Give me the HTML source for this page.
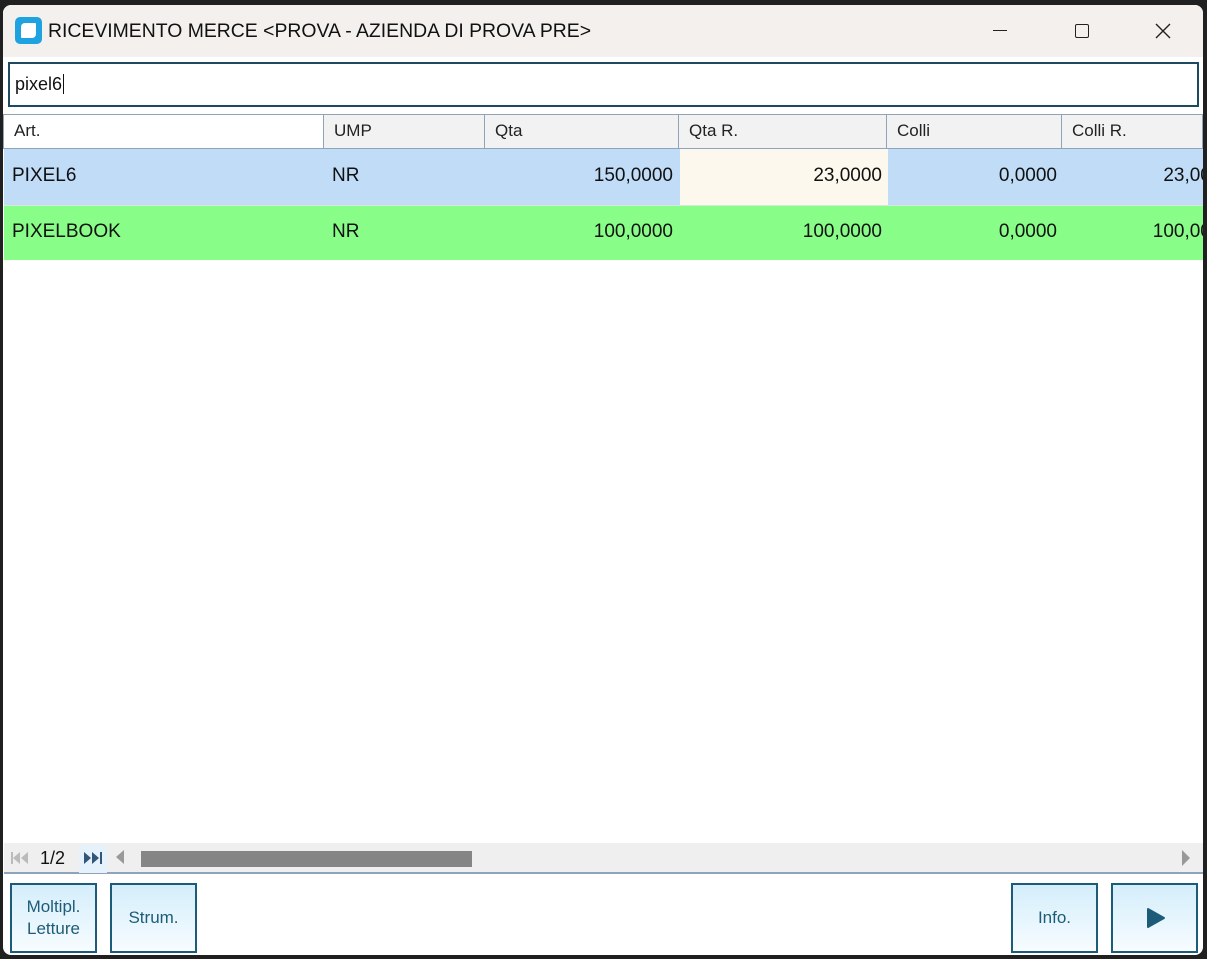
<!DOCTYPE html>
<html><head><style>
*{box-sizing:border-box;margin:0;padding:0}
body{width:1207px;height:959px;background:#202020;position:relative;overflow:hidden;font-family:"Liberation Sans","DejaVu Sans",sans-serif}
.win{position:absolute;left:3px;top:5px;width:1200px;height:950px;background:#fff;border-radius:8px;overflow:hidden}
.title{position:absolute;left:0;top:0;width:1200px;height:52px;background:#f3f0ee}
.abs{position:absolute}
.tt{left:45px;top:15px;font-size:19.4px;color:#111}
.input{left:5px;top:57px;width:1191px;height:45px;border:2px solid #1d4a5e;background:#fff}
.hdr{top:109px;height:35px;background:#f2f2f2;border:1px solid #8fa3bb;border-left:none;font-size:17px;color:#222;padding:6px 0 0 10px}
.cell{height:56px;font-size:19px;color:#111;padding-top:16px;white-space:nowrap}
.r{text-align:right;padding-right:6px}
.btn{top:878px;height:70px;border:2px solid #1d5c78;background:linear-gradient(#d4eefb,#f7fcff);color:#1d5c78;font-size:17px;text-align:center;display:flex;align-items:center;justify-content:center;line-height:22px}
</style></head><body>
<div class="win">
<div class="title">
<div class="abs" style="left:12px;top:12px;width:27px;height:27px;background:#1ea3e0;border-radius:5px"></div>
<div class="abs" style="left:18px;top:18px;width:15px;height:15px;background:#fff;border-radius:4px 1px 4px 1px"></div>
<div class="abs tt">RICEVIMENTO MERCE &lt;PROVA - AZIENDA DI PROVA PRE&gt;</div>
<div class="abs" style="left:990px;top:25px;width:14px;height:1px;background:#222"></div>
<div class="abs" style="left:1072px;top:19px;width:14px;height:14px;border:1.5px solid #222;border-radius:2px"></div>
<svg class="abs" style="left:1152px;top:18px" width="16" height="16" viewBox="0 0 16 16"><path d="M1 1L15 15M15 1L1 15" stroke="#222" stroke-width="1.4"/></svg>
</div>
<div class="abs input"><span class="abs" style="left:5px;top:10px;font-size:18px;color:#111">pixel6<span style="border-left:1px solid #111;margin-left:1px"></span></span></div>
<div class="abs hdr" style="left:0;width:321px;background:#fff;border-left:1px solid #8fa3bb">Art.</div>
<div class="abs hdr" style="left:321px;width:161px">UMP</div>
<div class="abs hdr" style="left:482px;width:194px">Qta</div>
<div class="abs hdr" style="left:676px;width:208px">Qta R.</div>
<div class="abs hdr" style="left:884px;width:175px">Colli</div>
<div class="abs hdr" style="left:1059px;width:141px">Colli R.</div>
<div class="abs" style="left:1px;top:144px;width:1199px;height:56px;background:#c0dcf7"></div>
<div class="abs" style="left:1px;top:200px;width:1199px;height:55px;background:#88fd88;border-top:1px solid #d8e8d8"></div>
<div class="abs cell" style="left:9px;top:144px">PIXEL6</div>
<div class="abs cell" style="left:329px;top:144px">NR</div>
<div class="abs cell r" style="left:482px;top:144px;width:194px">150,0000</div>
<div class="abs cell r" style="left:677px;top:144px;width:208px;background:#fdf8ee">23,0000</div>
<div class="abs cell r" style="left:885px;top:144px;width:175px">0,0000</div>
<div class="abs cell r" style="left:1060px;top:144px;width:175px">23,0000</div>
<div class="abs cell" style="left:9px;top:200px">PIXELBOOK</div>
<div class="abs cell" style="left:329px;top:200px">NR</div>
<div class="abs cell r" style="left:482px;top:200px;width:194px">100,0000</div>
<div class="abs cell r" style="left:677px;top:200px;width:208px">100,0000</div>
<div class="abs cell r" style="left:885px;top:200px;width:175px">0,0000</div>
<div class="abs cell r" style="left:1060px;top:200px;width:175px">100,0000</div>
<div class="abs" style="left:1px;top:838px;width:1199px;height:31px;background:#efefef;border-bottom:2px solid #8fa3bb"></div>
<svg class="abs" style="left:7px;top:846px" width="20" height="14" viewBox="0 0 20 14"><path d="M1 1h2v12H1z M10 1v12L3 7z M18 1v12L11 7z" fill="#bbb"/></svg>
<div class="abs" style="left:37px;top:843px;font-size:18px;color:#111">1/2</div>
<div class="abs" style="left:76px;top:840px;width:28px;height:28px;background:#e6f2fb"></div>
<svg class="abs" style="left:80px;top:846px" width="20" height="14" viewBox="0 0 20 14"><path d="M1 1v12L8 7z M9 1v12L16 7z M17 1h2v12h-2z" fill="#34557a"/></svg>
<div class="abs" style="left:113px;top:845px;width:0;height:0;border:7px solid transparent;border-right:8px solid #999;border-left:none"></div>
<div class="abs" style="left:138px;top:846px;width:331px;height:16px;background:#858585"></div>
<div class="abs" style="left:1179px;top:845px;width:0;height:0;border:8px solid transparent;border-left:8px solid #999;border-right:none"></div>
<div class="abs btn" style="left:7px;width:87px">Moltipl.<br>Letture</div>
<div class="abs btn" style="left:107px;width:87px">Strum.</div>
<div class="abs btn" style="left:1008px;width:87px">Info.</div>
<div class="abs btn" style="left:1108px;width:87px"><svg width="22" height="22" viewBox="0 0 22 22"><path d="M4 2 L20 11 L4 20 Z" fill="#1d5c78" stroke="#1d5c78" stroke-width="2" stroke-linejoin="round"/></svg></div>
</div>
</body></html>
